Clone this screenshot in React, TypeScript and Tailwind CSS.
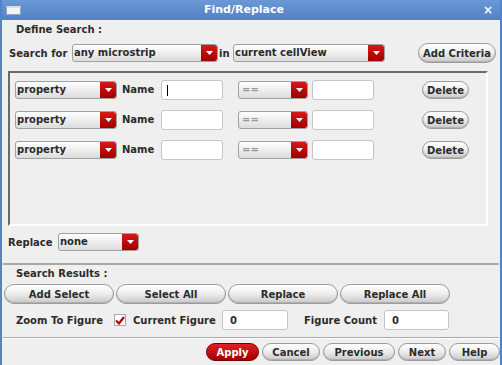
// Find/Replace dialog - search criteria, replace target and result navigation

import { useState } from "react";

const font = "font-['DejaVu_Sans',Verdana,sans-serif] font-bold text-[10px] text-[#2b2b2b]";

const Combo = ({ text, width, dim = false }: { text: string; width: string; dim?: boolean }) => (
  <div
    className={`${width} h-[18px] flex items-stretch rounded-[3px] border border-[#a0a0a0] bg-gradient-to-b from-white to-[#dcdcdc] overflow-hidden`}
  >
    <div className={`flex-1 pl-[1px] leading-[15px] truncate ${dim ? "text-[#9a9a9a] pl-[3px]" : ""}`}>{text}</div>
    <div className="w-[16px] flex items-center justify-center bg-gradient-to-b from-[#d81818] to-[#a00000] rounded-r-[2px]">
      <svg width="7" height="4" viewBox="0 0 7 4">
        <path d="M0 0 L7 0 L3.5 4 Z" fill="#fff" />
      </svg>
    </div>
  </div>
);

const Button = ({ label, width, height = "h-[18px]" }: { label: string; width: string; height?: string }) => (
  <button
    className={`${width} ${height} rounded-full border border-[#9c9c9c] bg-gradient-to-b from-white via-[#ececec] to-[#c8c8c8] shadow-[inset_0_-1px_0_#b0b0b0] flex items-center justify-center`}
  >
    {label}
  </button>
);

const Field = ({ width, value = "", caret = false }: { width: string; value?: string; caret?: boolean }) => (
  <div className={`${width} h-[20px] rounded-[3px] border border-[#c4c4c4] bg-white flex items-center pl-[7px]`}>
    {caret && <div className="w-[1px] h-[11px] bg-black -ml-[2px]" />}
    {value}
  </div>
);

const CriteriaRow = ({ caret }: { caret?: boolean }) => (
  <div className="flex items-center h-[20px]">
    <Combo text="property" width="w-[102px]" />
    <span className="ml-[5px] w-[39px] -mt-[2px]">Name</span>
    <Field width="w-[62px]" caret={caret} />
    <div className="ml-[15px]">
      <Combo text="==" width="w-[70px]" dim />
    </div>
    <div className="ml-[4px]">
      <Field width="w-[62px]" />
    </div>
    <div className="ml-[48px]">
      <Button label="Delete" width="w-[47px]" />
    </div>
  </div>
);

export default function App() {
  const [zoom, setZoom] = useState(true);

  return (
    <div className={`w-[502px] h-[365px] bg-[#5183c8] px-[2px] flex flex-col overflow-hidden ${font}`}>
      {/* Title bar */}
      <div className="h-[20px] shrink-0 flex items-center relative bg-gradient-to-b from-[#6c98d6] to-[#5181c6]">
        <div className="ml-[4px] w-[15px] h-[9px] bg-[#f4f4f4] border border-[#8aa6cc] border-t-[2px] border-t-[#dcdcdc]" />
        <div className="flex-1 text-center text-white text-[11px] pr-[16px]">Find/Replace</div>
        <div className="mr-[7px] text-white text-[12px] leading-none">×</div>
      </div>

      {/* Body */}
      <div className="flex-1 bg-[#efefef] flex flex-col">
        <div className="h-[18px] pl-[14px] flex items-center">Define Search :</div>

        <div className="mt-[5px] h-[20px] pl-[7px] flex items-center">
          <span className="w-[63px]">Search for</span>
          <Combo text="any microstrip" width="w-[146px]" />
          <span className="w-[15px] pl-[1px]">in</span>
          <Combo text="current cellView" width="w-[152px]" />
          <div className="ml-[33px]">
            <Button label="Add Criteria" width="w-[78px]" height="h-[20px]" />
          </div>
        </div>

        {/* Criteria panel */}
        <div className="mt-[8px] ml-[6px] w-[480px] h-[155px] border-2 border-t-[#6a6a6a] border-l-[#6a6a6a] border-r-white border-b-white pt-[7px] pl-[5px] flex flex-col gap-[10px]">
          <CriteriaRow caret />
          <CriteriaRow />
          <CriteriaRow />
        </div>

        <div className="mt-[6px] pl-[6px] h-[20px] flex items-center">
          <span className="w-[50px]">Replace</span>
          <Combo text="none" width="w-[81px]" />
        </div>

        <div className="mt-[11px] mx-[1px] h-[2px] border-t-2 border-[#a8a8a8]" />

        <div className="h-[17px] pl-[14px] flex items-center">Search Results :</div>

        <div className="mt-[2px] pl-[2px] flex gap-[2px]">
          <Button label="Add Select" width="w-[110px]" height="h-[20px]" />
          <Button label="Select All" width="w-[110px]" height="h-[20px]" />
          <Button label="Replace" width="w-[110px]" height="h-[20px]" />
          <Button label="Replace All" width="w-[110px]" height="h-[20px]" />
        </div>

        <div className="mt-[6px] pl-[14px] h-[20px] flex items-center">
          <span className="w-[98px]">Zoom To Figure</span>
          <button
            onClick={() => setZoom(!zoom)}
            className="w-[12px] h-[12px] border border-[#a8a8a8] bg-white flex items-center justify-center"
          >
            {zoom && (
              <svg width="10" height="9" viewBox="0 0 10 9">
                <path d="M1 4.5 L4 7.5 L9 1" stroke="#c40000" strokeWidth="2.2" fill="none" />
              </svg>
            )}
          </button>
          <span className="ml-[7px] w-[89px]">Current Figure</span>
          <Field width="w-[66px]" value="0" />
          <span className="ml-[16px] w-[80px]">Figure Count</span>
          <Field width="w-[65px]" value="0" />
        </div>

        <div className="mt-[7px] mx-[1px] h-[2px] border-t border-[#a8a8a8] bg-white" />

        <div className="mt-[4px] pl-[204px] flex items-center gap-[3px]">
          <button className="w-[53px] h-[18px] rounded-full border border-[#7a0000] bg-gradient-to-b from-[#e02020] to-[#a00000] text-white flex items-center justify-center">
            Apply
          </button>
          <Button label="Cancel" width="w-[58px]" />
          <Button label="Previous" width="w-[72px]" />
          <Button label="Next" width="w-[48px]" />
          <Button label="Help" width="w-[51px]" />
        </div>
      </div>
    </div>
  );
}
